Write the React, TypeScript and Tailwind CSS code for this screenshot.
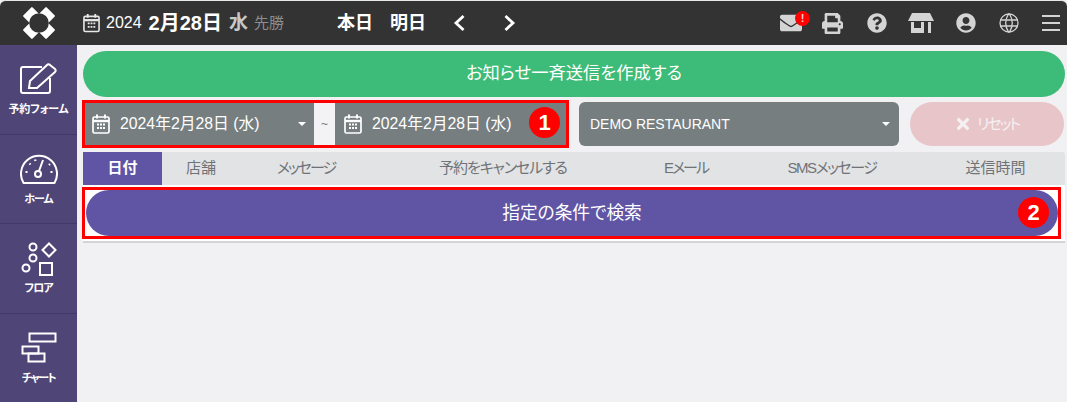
import React from "react";
import { FaEnvelope, FaPrint, FaQuestionCircle, FaUserCircle, FaTimes } from "react-icons/fa";
import { TbWorld } from "react-icons/tb";

function Cal({ className = "" }: { className?: string }) {
  return (
    <svg viewBox="0 0 18 20" className={className} fill="none" stroke="currentColor" strokeWidth="1.7">
      <rect x="1" y="3" width="16" height="16" rx="1.5" />
      <path d="M1 7h16" strokeWidth="2.4" />
      <path d="M5 0.500v4M13 0.500v4" strokeWidth="2" />
      <path d="M5 10.500h2M8 10.500h2M11 10.500h2M5 14h2M8 14h2M11 14h2" strokeWidth="1.8" />
    </svg>
  );
}

function Logo() {
  return (
    <svg viewBox="-16 -16 32 32" className="w-8 h-8" fill="#fff">
      <rect x="-6.500" y="-16.500" width="13" height="16.500" rx="1" transform="rotate(-45)" />
      <rect x="-6.500" y="-16.500" width="13" height="16.500" rx="1" transform="rotate(45)" />
      <rect x="-6.500" y="-16.500" width="13" height="16.500" rx="1" transform="rotate(135)" />
      <rect x="-6.500" y="-16.500" width="13" height="16.500" rx="1" transform="rotate(225)" />
      <circle r="9.800" fill="#333" />
    </svg>
  );
}

function Store() {
  return (
    <svg viewBox="0 0 26 20" className="w-[26px] h-[20px]" fill="#d4d4d4">
      <path d="M4 0h18l4 8H0z" />
      <path d="M3 9h13v11H3zM20 9h3v11h-3z" />
      <rect x="6" y="9" width="7" height="6" fill="#333" />
    </svg>
  );
}

function Hamburger() {
  return (
    <div className="flex flex-col gap-[5px] w-[18px]">
      <span className="h-[2px] bg-[#d4d4d4]" />
      <span className="h-[2px] bg-[#d4d4d4]" />
      <span className="h-[2px] bg-[#d4d4d4]" />
    </div>
  );
}

function Caret() {
  return <span className="block w-0 h-0 border-x-[4.500px] border-x-transparent border-t-[4.500px] border-t-white" />;
}

function DateField({ className }: { className: string }) {
  return (
    <div className={`h-[44px] bg-[#767e80] flex items-center text-white text-[15.800px] ${className}`}>
      <Cal className="w-[18px] h-[20px] shrink-0" />
      <span className="ml-[10px] whitespace-nowrap">2024年2月28日 (水)</span>
    </div>
  );
}

function Chevron({ d }: { d: string }) {
  return (
    <svg viewBox="0 0 12 16" className="w-[12px] h-[16px]" fill="none" stroke="#fff" strokeWidth="2.800" strokeLinecap="square">
      <path d={d} />
    </svg>
  );
}

const navIcons = {
  form: (
    <svg viewBox="0 0 38 31" className="w-[38px] h-[31px]" fill="none" stroke="#fff" strokeWidth="2">
      <path d="M30 15v13a2 2 0 0 1-2 2H3a2 2 0 0 1-2-2V6a2 2 0 0 1 2-2h19" />
      <path d="M9 25l1-7L27 2a2 2 0 0 1 3 0l5 4a2 2 0 0 1 0 3L17 25z" />
    </svg>
  ),
  home: (
    <svg viewBox="0 0 38 30" className="w-[38px] h-[30px]" fill="none" stroke="#fff" strokeWidth="2">
      <path d="M3.500 29h31a18 18 0 1 0-31 0z" strokeLinejoin="round" />
      <circle cx="18" cy="20" r="3" />
      <path d="M19 17l4-11" />
      <path d="M9.500 9.500l1 1M15 5.500l.5 1.500M30 10l-1 1M5.500 18h2M30.500 18h2" strokeWidth="2.200" />
    </svg>
  ),
  floor: (
    <svg viewBox="0 0 36 34" className="w-[36px] h-[34px]" fill="none" stroke="#fff" strokeWidth="2">
      <circle cx="12" cy="5" r="3.500" />
      <circle cx="12" cy="16" r="3.500" />
      <circle cx="5" cy="26" r="3.500" />
      <rect x="19" y="21" width="12" height="12" />
      <path d="M28 1.500l6.500 6.500-6.500 6.500-6.500-6.500z" />
    </svg>
  ),
  chart: (
    <svg viewBox="0 0 36 31" className="w-[36px] h-[31px]" fill="none" stroke="#fff" strokeWidth="2">
      <rect x="8.500" y="1.500" width="26" height="8" />
      <rect x="1.500" y="14.500" width="16" height="7" />
      <rect x="7.500" y="21.500" width="16" height="8" />
    </svg>
  ),
};

function NavItem({ icon, label, h, pt, mt, tracking, last }: { icon: React.ReactNode; label: string; h: string; pt: string; mt: string; tracking: string; last?: boolean }) {
  return (
    <div className={`${h} ${pt} flex flex-col items-center ${last ? "" : "border-b border-[#41396a]"}`}>
      {icon}
      <span className={`${mt} ${tracking} text-white text-[11px] font-bold leading-[14px] whitespace-nowrap`}>{label}</span>
    </div>
  );
}

function Badge({ n }: { n: number }) {
  return (
    <span className="absolute w-[31px] h-[31px] rounded-full bg-[#f00] text-white font-bold text-[22px] leading-none flex items-center justify-center">
      {n}
    </span>
  );
}

export default function App() {
  const tabs: [string, string][] = [
    ["店舗", "w-[78px]"],
    ["メッセージ", "w-[132px] tracking-[-2px]"],
    ["予約をキャンセルする", "w-[262px] tracking-[-1.100px]"],
    ["Eメール", "w-[104px] tracking-[-2px]"],
    ["SMSメッセージ", "w-[188px] tracking-[-1.500px]"],
    ["送信時間", "w-[139px]"],
  ];
  return (
    <div className="w-[1067px] h-[402px] overflow-hidden bg-[#f1f1f4] flex flex-col font-['Liberation_Sans','Noto_Sans_CJK_JP',sans-serif] [font-feature-settings:'palt'] relative">
      <header className="h-[45px] shrink-0 bg-[#333] rounded-t-[6px] border-t border-[#e8e8e8] flex items-center">
        <div className="w-[77px] flex justify-center"><Logo /></div>
        <div className="flex items-center text-white w-[254px] ml-[6px]">
          <Cal className="w-[17px] h-[20px] text-[#e8e8e8]" />
          <span className="ml-[6px] text-[16px]">2024</span>
          <span className="ml-[7px] text-[20px] font-bold">2月28日</span>
          <span className="ml-[7px] text-[19px] font-bold text-[#c8c8c8]">水</span>
          <span className="ml-[6px] text-[15px] text-[#8e8e8e]">先勝</span>
        </div>
        <div className="flex items-center text-white text-[18px] font-bold gap-[17px]">
          <span className="whitespace-nowrap">本日</span>
          <span className="whitespace-nowrap">明日</span>
        </div>
        <div className="ml-[27px]"><Chevron d="M9.500 2L3 8l6.500 6" /></div>
        <div className="ml-[39px]"><Chevron d="M2.500 2L9 8l-6.500 6" /></div>
        <div className="flex-1" />
        <div className="flex items-center text-[#d4d4d4]">
          <div className="relative">
            <FaEnvelope className="w-[22px] h-[22px]" />
            <span className="absolute -top-[1px] left-[15px] w-[15px] h-[15px] rounded-full bg-[#f00] text-[#ffd0d0] text-[11px] font-bold leading-[15px] text-center">!</span>
          </div>
          <FaPrint className="w-[21px] h-[21px] ml-[20px]" />
          <FaQuestionCircle className="w-[20px] h-[20px] ml-[24px]" />
          <div className="ml-[21px]"><Store /></div>
          <FaUserCircle className="w-[20px] h-[20px] ml-[22px]" />
          <TbWorld className="w-[24px] h-[24px] ml-[21px]" strokeWidth={1.300} />
          <div className="ml-[21px] mr-[7px]"><Hamburger /></div>
        </div>
      </header>
      <div className="flex flex-1 min-h-0">
        <nav className="w-[77px] shrink-0 bg-[#4f4677] flex flex-col">
          <NavItem icon={navIcons.form} label="予約フォーム" h="h-[90px]" pt="pt-[18px]" mt="mt-[8px]" tracking="tracking-[-0.200px]" />
          <NavItem icon={navIcons.home} label="ホーム" h="h-[89px]" pt="pt-[19px]" mt="mt-[8px]" tracking="tracking-[-1px]" />
          <NavItem icon={navIcons.floor} label="フロア" h="h-[90px]" pt="pt-[18px]" mt="mt-[5px]" tracking="tracking-[-1px]" />
          <NavItem icon={navIcons.chart} label="チャート" h="h-[88px]" pt="pt-[18px]" mt="mt-[8px]" tracking="tracking-[-1.500px]" last />
        </nav>
        <main className="flex-1 min-w-0 pl-[6px] pr-[2px] pt-[6px] flex flex-col">
          <div className="h-[46px] rounded-full bg-[#3dbb78] text-white text-[17.300px] flex items-center justify-center">お知らせ一斉送信を作成する</div>
          <div className="mt-[5px] flex items-center h-[44px]">
            <DateField className="w-[231px] pl-[9px]" />
            <div className="w-[21px] h-[44px] flex items-center justify-center text-[#777] text-[12px] bg-[#f3f3f6]">~</div>
            <DateField className="w-[232px] pl-[9px]" />
            <div className="ml-[12px] w-[320px] h-[44px] bg-[#767e80] rounded-[6px] text-white text-[14px] flex items-center justify-between pl-[11px] pr-[9px]">
              <span>DEMO RESTAURANT</span>
              <Caret />
            </div>
            <div className="ml-[11px] w-[154px] h-[44px] rounded-full bg-[#e8c5c9] text-[#f5f1f2] text-[15px] font-bold flex items-center justify-center gap-[6px]">
              <FaTimes className="w-[16px] h-[18px]" />
              <span className="font-normal tracking-[-2px]">リセット</span>
            </div>
          </div>
          <div className="mt-[6px] h-[33px] bg-[#e2e3e5] rounded-t-[3px] flex items-center text-[15px] text-[#6f7378]">
            <div className="w-[79px] h-[33px] bg-[#6055a4] text-white font-bold flex items-center justify-center">日付</div>
            {tabs.map(([t, w]) => (
              <div key={t} className={`${w} flex items-center justify-center whitespace-nowrap`}>{t}</div>
            ))}
          </div>
          <div className="h-[58px] bg-white border-b-2 border-[#d4d4d6] pt-[5px] pl-[3px] pr-[7px]">
            <div className="h-[46px] rounded-full bg-[#6055a4] text-white text-[17.700px] flex items-center justify-center">指定の条件で検索</div>
          </div>
        </main>
      </div>
      <div className="absolute left-[82px] top-[100px] w-[487px] h-[48px] border-[3px] border-[#f00]" />
      <div className="absolute left-[82px] top-[187px] w-[979px] h-[52px] border-[3px] border-[#f00]" />
      <div className="absolute left-[529px] top-[107px] w-[31px] h-[31px]"><Badge n={1} /></div>
      <div className="absolute left-[1018px] top-[197px] w-[31px] h-[31px]"><Badge n={2} /></div>
      <div className="absolute left-[298px] top-[122px]"><Caret /></div>
    </div>
  );
}
